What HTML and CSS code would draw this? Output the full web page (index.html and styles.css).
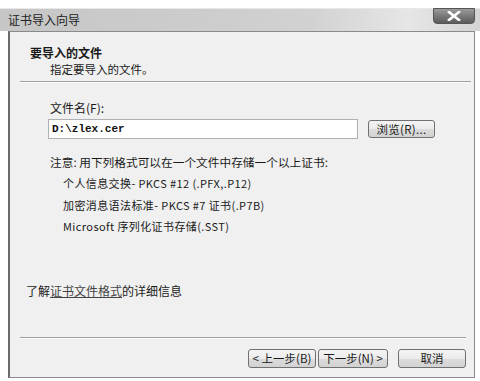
FILE: index.html
```html
<!DOCTYPE html>
<html lang="zh-CN">
  <head>
    <meta charset="UTF-8" />
    <title>证书导入向导</title>
    <link rel="stylesheet" href="styles.css">
  </head>
  <body>
    <div class="window">
      <div class="titlebar">
        <span class="title">证书导入向导</span>
        <button class="close" type="button">
          <svg width="14" height="10" viewBox="0 0 14 10">
            <path d="M2 1 L12 9 M12 1 L2 9" stroke="#fff" stroke-width="2.6" stroke-linecap="square" />
          </svg>
        </button>
      </div>

      <div class="client">
        <div class="header">
          <p class="head-title">要导入的文件</p>
          <p class="head-sub">指定要导入的文件。</p>
        </div>
        <hr class="sep sep-top">

        <div class="page">
          <p class="label">文件名(F):</p>
          <div class="file-row">
            <input class="file-input" type="text" value="D:\zlex.cer">
            <button class="btn browse" type="button">浏览(R)...</button>
          </div>

          <p class="note">注意: 用下列格式可以在一个文件中存储一个以上证书:</p>
          <ul class="formats">
            <li>个人信息交换- PKCS #12 (.PFX,.P12)</li>
            <li>加密消息语法标准- PKCS #7 证书(.P7B)</li>
            <li>Microsoft 序列化证书存储(.SST)</li>
          </ul>

          <p class="more">了解<a href="#">证书文件格式</a>的详细信息</p>
        </div>

        <hr class="sep sep-bottom">
        <div class="actions">
          <button class="btn nav back" type="button">&lt; 上一步(B)</button>
          <button class="btn nav next" type="button">下一步(N) &gt;</button>
          <button class="btn nav cancel" type="button">取消</button>
        </div>
      </div>
    </div>
  </body>
</html>
```

FILE: styles.css
```css
body {
  margin: 0;
  background-color: #fff;
  font-family: "Noto Sans CJK SC", "Noto Sans", sans-serif;
  color: #1a1a1a;
}

p {
  margin: 0;
}

.window {
  padding-top: 8px;
  width: 480px;
  height: 381px;
  box-sizing: border-box;
}

.titlebar {
  display: flex;
  align-items: flex-start;
  justify-content: space-between;
  height: 23px;
  background: linear-gradient(90deg, #c6c6c6 0%, #cdcdcd 45%, #d2d2d2 65%, #e6e6e6 85%, #d4d4d4 100%);
  border-top: 1px solid #e8e8e8;
  box-sizing: border-box;
}

.title {
  padding-left: 8px;
  font-size: 12px;
  line-height: 22px;
  color: #222;
}

.close {
  display: flex;
  align-items: center;
  justify-content: center;
  width: 42px;
  height: 16px;
  margin: -1px 5px 0 0;
  padding: 0;
  border: 1px solid #555;
  border-radius: 0 0 4px 4px;
  background: linear-gradient(180deg, #9a9a9a 0%, #7a7a7a 50%, #5c5c5c 100%);
}

.client {
  display: flex;
  flex-direction: column;
  height: 347px;
  margin: 0 5px 0 8px;
  border: 1px solid #8a8a8a;
  border-left: 2px solid #6a6a6a;
  background-color: #f0f0f0;
  box-sizing: border-box;
}

.header {
  padding: 13px 0 0 20px;
}

.head-title {
  font-size: 12px;
  line-height: 16px;
  font-weight: bold;
}

.head-sub {
  font-size: 11.5px;
  line-height: 16px;
  padding-left: 20px;
}

.sep {
  margin: 0;
  border: 0;
  height: 0;
  border-top: 1px solid #a0a0a0;
  border-bottom: 1px solid #fafafa;
}

.sep-top {
  margin: 4px 3px 0 10px;
}

.sep-bottom {
  margin: 0 8px 0 10px;
}

.page {
  flex: 1;
  padding: 17px 0 0 40px;
  font-size: 12px;
}

.label {
  line-height: 16px;
}

.file-row {
  display: flex;
  align-items: center;
  margin-top: 3px;
  margin-left: -2px;
}

.file-input {
  width: 310px;
  height: 20px;
  box-sizing: border-box;
  border: 1px solid #b0b0b0;
  background-color: #fff;
  font-family: "Liberation Mono", "Noto Sans Mono", monospace;
  font-weight: bold;
  font-size: 11px;
  padding: 0 3px;
  color: #111;
}

.btn {
  font-family: "Noto Sans CJK SC", "Noto Sans", sans-serif;
  font-size: 11.5px;
  color: #1a1a1a;
  border: 1px solid #707070;
  border-radius: 3px;
  background: linear-gradient(180deg, #f4f4f4 0%, #ebebeb 50%, #dcdcdc 51%, #d2d2d2 100%);
  padding: 0;
  box-sizing: border-box;
}

.browse {
  width: 67px;
  height: 18px;
  margin-left: 10px;
  line-height: 14px;
  letter-spacing: 0.3px;
}

.note {
  margin-top: 15px;
  font-size: 11.7px;
  line-height: 16px;
}

.formats {
  list-style: none;
  margin: 5px 0 0 13px;
  padding: 0;
  font-size: 11px;
}

.formats li {
  line-height: 16px;
  margin-bottom: 5.5px;
  letter-spacing: 0.4px;
}

.more {
  margin: 49px 0 0 -24px;
  font-size: 12px;
  line-height: 16px;
}

.more a {
  color: #444;
  text-decoration: underline;
}

.actions {
  display: flex;
  justify-content: flex-end;
  padding: 10px 8px 9px 0;
}

.nav {
  height: 19px;
  line-height: 15px;
}

.back {
  width: 68px;
}

.next {
  width: 70px;
  margin-left: 2px;
}

.cancel {
  width: 68px;
  margin-left: 10px;
}
```
